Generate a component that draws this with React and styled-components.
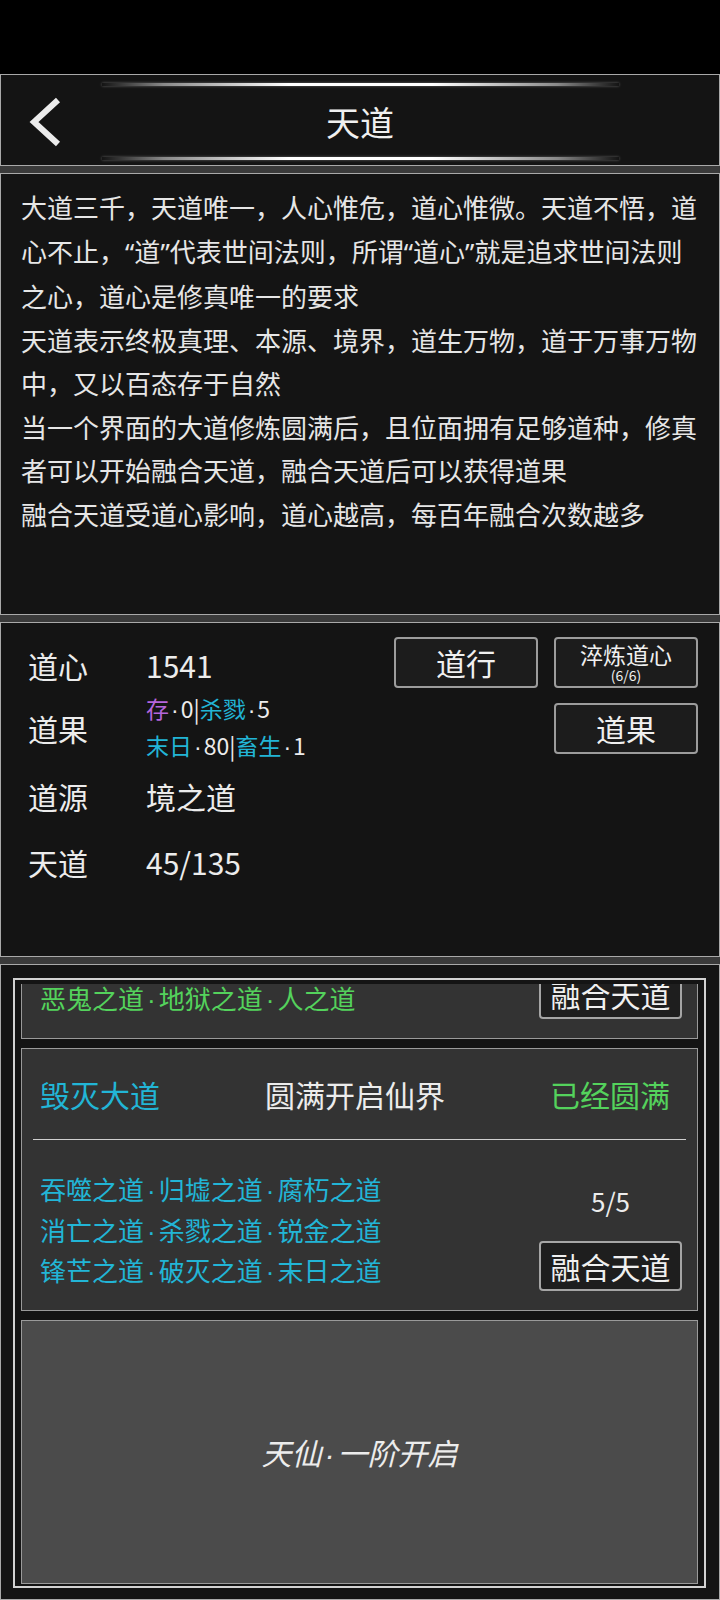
import React from 'react';
import styled, { createGlobalStyle } from 'styled-components';

const GlobalStyle = createGlobalStyle`
  html, body { margin: 0; padding: 0; background: #3a3a3a; }
  body { font-family: "Noto Sans CJK SC", "Noto Sans", sans-serif; color: #e8e8e8; }
  * { box-sizing: border-box; }
`;

const CYAN = '#22b5d6';
const GREEN = '#54d25c';
const PURPLE = '#b565dc';

const Page = styled.div`
  width: 720px;
  height: 1600px;
  display: flex;
  flex-direction: column;
  background: #3a3a3a;
  overflow: hidden;
`;

const StatusBar = styled.div`
  flex: none;
  height: 74px;
  background: #000;
`;

const Stack = styled.div`
  flex: 1;
  display: flex;
  flex-direction: column;
  gap: 7px;
`;

const Panel = styled.section`
  flex: none;
  height: ${(p) => p.$h}px;
  background: #141414;
  border: 1px solid #a9a9a9;
`;

/* narrow latin punctuation inside CJK text */
const Q = styled.span`
  font-family: "Noto Sans", "Liberation Sans", sans-serif;
`;

const DotMark = styled.span`
  font-family: "Liberation Sans", "Noto Sans", sans-serif;
  padding: 0 ${(p) => p.$pad ?? 1}px;
`;

const Dotted = ({ text, pad }) => {
  const parts = text.split('·');
  return parts.map((part, i) => (
    <React.Fragment key={i}>
      {i > 0 && <DotMark $pad={pad}>·</DotMark>}
      {part}
    </React.Fragment>
  ));
};

/* ---------- header ---------- */
const HeaderPanel = styled(Panel)`
  display: flex;
  flex-direction: column;
  align-items: center;
  padding-top: 8px;
`;

const Glow = styled.div`
  flex: none;
  width: 517px;
  height: 3px;
  background: linear-gradient(
    90deg,
    rgba(255, 255, 255, 0) 0%,
    rgba(255, 255, 255, 0.5) 12%,
    #ffffff 36%,
    #ffffff 64%,
    rgba(255, 255, 255, 0.5) 88%,
    rgba(255, 255, 255, 0) 100%
  );
  box-shadow: 0 0 3px rgba(255, 255, 255, 0.35);
`;

const TitleRow = styled.div`
  align-self: stretch;
  height: 71px;
  display: grid;
  grid-template-columns: 1fr auto 1fr;
  align-items: center;
`;

const BackButton = styled.div`
  display: flex;
  align-items: center;
  padding-left: 28px;
`;

const Title = styled.h1`
  margin: 0;
  font-size: 34px;
  font-weight: 400;
  line-height: 1;
  color: #f0f0f0;
`;

/* ---------- description ---------- */
const DescPanel = styled(Panel)`
  padding: 11px 20px 0 20px;
`;

const Para = styled.p`
  margin: 0;
  font-size: 26px;
  line-height: 43.5px;
  color: #e6e6e6;
`;

/* ---------- stats ---------- */
const StatsPanel = styled(Panel)`
  display: flex;
  justify-content: space-between;
  padding: 14px 21px 0 27px;
`;

const InfoList = styled.div`
  display: flex;
  flex-direction: column;
`;

const InfoRow = styled.div`
  display: flex;
  align-items: center;
  height: ${(p) => p.$h}px;
`;

const Label = styled.div`
  width: 118px;
  font-size: 30px;
  color: #ececec;
`;

const Value = styled.div`
  font-size: 30px;
  color: #ececec;
`;

const MultiValue = styled.div`
  font-size: 23px;
  line-height: 35px;
  color: #ececec;
`;

const Tint = styled.span`
  color: ${(p) => p.$c};
`;

const ButtonGrid = styled.div`
  display: grid;
  grid-template-columns: 144px 144px;
  grid-auto-rows: 51px;
  gap: 15px 16px;
  align-content: start;
`;

const DarkButton = styled.button`
  grid-column: ${(p) => p.$col || 'auto'};
  display: flex;
  flex-direction: column;
  align-items: center;
  justify-content: center;
  margin: 0;
  padding: 0;
  background: #1c1c1c;
  border: 2px solid #9c9c9c;
  border-radius: 4px;
  color: #f0f0f0;
  font-family: inherit;
  font-size: 30px;
  line-height: 1.1;
`;

const BtnMain = styled.span`
  font-size: 23px;
  line-height: 25px;
`;

const BtnSub = styled.span`
  font-size: 14px;
  line-height: 16px;
`;

/* ---------- bottom list ---------- */
const BottomPanel = styled(Panel)`
  display: flex;
  padding: 13px 13px 11px 12px;
`;

const Frame = styled.div`
  flex: 1;
  display: flex;
  flex-direction: column;
  border: 2px solid #d2d2d2;
  padding: 4px 6px 2px;
`;

const Viewport = styled.div`
  flex: 1;
  overflow: hidden;
`;

const CardList = styled.div`
  display: flex;
  flex-direction: column;
  gap: 9px;
  margin-top: -208px;
`;

const Card = styled.div`
  flex: none;
  height: ${(p) => p.$h || 263}px;
  background: ${(p) => p.$bg || '#333333'};
  border: 1px solid #9a9a9a;
  display: flex;
  flex-direction: column;
`;

const CardHead = styled.div`
  flex: none;
  height: 90px;
  display: grid;
  grid-template-columns: 1fr auto 1fr;
  align-items: center;
  padding: 0 27px 0 18px;
  font-size: 30px;
`;

const HeadCell = styled.div`
  justify-self: ${(p) => p.$align};
  color: ${(p) => p.$c || '#ececec'};
`;

const Divider = styled.div`
  flex: none;
  height: 1px;
  margin: 0 11px;
  background: #cfcfcf;
`;

const CardBody = styled.div`
  display: grid;
  grid-template-columns: 1fr 143px;
  align-items: start;
  padding: 30px 15px 0 18px;
`;

const DaoLines = styled.div`
  font-size: 26px;
  line-height: 38.5px;
  color: ${(p) => p.$c};
  white-space: nowrap;
`;

const FuseCol = styled.div`
  display: flex;
  flex-direction: column;
  align-items: center;
`;

const Count = styled.div`
  margin-top: 12px;
  font-size: 26px;
  line-height: 38px;
  color: #ececec;
`;

const FuseButton = styled.button`
  margin: 21px 0 0;
  padding: 0;
  width: 143px;
  height: 50px;
  background: #1e1e1e;
  border: 2px solid #a5a5a5;
  border-radius: 4px;
  color: #f0f0f0;
  font-family: inherit;
  font-size: 30px;
  line-height: 1;
`;

const LockedCard = styled(Card)`
  align-items: center;
  justify-content: center;
`;

const LockedText = styled.div`
  font-size: 30px;
  font-style: italic;
  color: #ececec;
`;

const ChevronLeft = () => (
  <svg width="33" height="50" viewBox="0 0 33 50" aria-hidden="true">
    <polyline
      points="29,3 5,25 29,47"
      fill="none"
      stroke="#ececec"
      strokeWidth="6"
      strokeLinejoin="miter"
    />
  </svg>
);

const daoCards = [
  {
    name: '轮回大道',
    nameColor: CYAN,
    lineColor: GREEN,
    lines: ['轮回之道·生死之道·因果之道', '幽冥之道·魂魄之道·畜生之道', '恶鬼之道·地狱之道·人之道'],
    count: '5/5',
  },
  {
    name: '毁灭大道',
    nameColor: CYAN,
    lineColor: CYAN,
    lines: ['吞噬之道·归墟之道·腐朽之道', '消亡之道·杀戮之道·锐金之道', '锋芒之道·破灭之道·末日之道'],
    count: '5/5',
  },
];

export default function App() {
  return (
    <Page>
      <GlobalStyle />
      <StatusBar />
      <Stack>
        <HeaderPanel $h={92}>
          <Glow />
          <TitleRow>
            <BackButton>
              <ChevronLeft />
            </BackButton>
            <Title>天道</Title>
            <div />
          </TitleRow>
          <Glow />
        </HeaderPanel>

        <DescPanel $h={442}>
          <Para>
            大道三千，天道唯一，人心惟危，道心惟微。天道不悟，道心不止，<Q>“</Q>道<Q>”</Q>代表世间法则，所谓<Q>“</Q>道心<Q>”</Q>就是追求世间法则之心，道心是修真唯一的要求
          </Para>
          <Para>天道表示终极真理、本源、境界，道生万物，道于万事万物中，又以百态存于自然</Para>
          <Para>
            当一个界面的大道修炼圆满后，且位面拥有足够道种，修真者可以开始融合天道，融合天道后可以获得道果
          </Para>
          <Para>融合天道受道心影响，道心越高，每百年融合次数越多</Para>
        </DescPanel>

        <StatsPanel $h={335}>
          <InfoList>
            <InfoRow $h={55}>
              <Label>道心</Label>
              <Value>1541</Value>
            </InfoRow>
            <InfoRow $h={71}>
              <Label>道果</Label>
              <MultiValue>
                <div>
                  <Tint $c={PURPLE}>存</Tint>
                  <DotMark $pad={2}>·</DotMark>0|<Tint $c={CYAN}>杀戮</Tint>
                  <DotMark $pad={2}>·</DotMark>5
                </div>
                <div>
                  <Tint $c={CYAN}>末日</Tint>
                  <DotMark $pad={2}>·</DotMark>80|<Tint $c={CYAN}>畜生</Tint>
                  <DotMark $pad={2}>·</DotMark>1
                </div>
              </MultiValue>
            </InfoRow>
            <InfoRow $h={66}>
              <Label>道源</Label>
              <Value>境之道</Value>
            </InfoRow>
            <InfoRow $h={66}>
              <Label>天道</Label>
              <Value>45/135</Value>
            </InfoRow>
          </InfoList>
          <ButtonGrid>
            <DarkButton>道行</DarkButton>
            <DarkButton>
              <BtnMain>淬炼道心</BtnMain>
              <BtnSub>(6/6)</BtnSub>
            </DarkButton>
            <DarkButton $col={2}>道果</DarkButton>
          </ButtonGrid>
        </StatsPanel>

        <BottomPanel $h={636}>
          <Frame>
            <Viewport>
              <CardList>
                {daoCards.map((c) => (
                  <Card key={c.name}>
                    <CardHead>
                      <HeadCell $align="start" $c={c.nameColor}>{c.name}</HeadCell>
                      <HeadCell $align="center">圆满开启仙界</HeadCell>
                      <HeadCell $align="end" $c={GREEN}>已经圆满</HeadCell>
                    </CardHead>
                    <Divider />
                    <CardBody>
                      <DaoLines $c={c.lineColor}>
                        {c.lines.map((l) => (
                          <div key={l}>
                            <Dotted text={l} pad={3} />
                          </div>
                        ))}
                      </DaoLines>
                      <FuseCol>
                        <Count>{c.count}</Count>
                        <FuseButton>融合天道</FuseButton>
                      </FuseCol>
                    </CardBody>
                  </Card>
                ))}
                <LockedCard $h={264} $bg="#4b4b4b">
                  <LockedText>
                    <Dotted text="天仙·一阶开启" pad={3} />
                  </LockedText>
                </LockedCard>
              </CardList>
            </Viewport>
          </Frame>
        </BottomPanel>
      </Stack>
    </Page>
  );
}
